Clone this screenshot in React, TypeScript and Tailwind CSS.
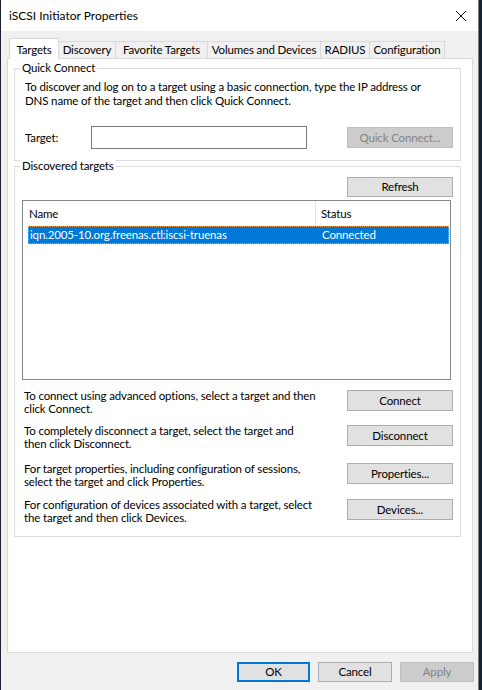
import React from 'react';

const FONT = { fontFamily: 'Lato, "Noto Sans", sans-serif' };

const tabs = [
  { label: 'Targets', w: 'w-[50px]', active: true },
  { label: 'Discovery', w: 'w-[57px]' },
  { label: 'Favorite Targets', w: 'w-[92px]' },
  { label: 'Volumes and Devices', w: 'w-[113px]' },
  { label: 'RADIUS', w: 'w-[49px]' },
  { label: 'Configuration', w: 'w-[75px]' },
];

const Btn: React.FC<{ children: React.ReactNode; disabled?: boolean; className?: string }> = ({ children, disabled, className = '' }) => (
  <button
    className={
      'flex items-center justify-center border leading-none whitespace-nowrap ' +
      (disabled ? 'bg-[#cccccc] border-[#bfbfbf] text-[#838383] ' : 'bg-[#e1e1e1] border-[#adadad] text-black ') +
      className
    }
  >
    {children}
  </button>
);

// group box with the caption sitting on the top border
const Group: React.FC<{ title: string; className?: string; children: React.ReactNode }> = ({ title, className = '', children }) => (
  <div className={'relative border border-[#dcdcdc] ' + className}>
    <span className="absolute -top-[8px] left-[5px] bg-white px-[2px] leading-[14px]">{title}</span>
    {children}
  </div>
);

const actions = [
  { text: ['To connect using advanced options, select a target and then', 'click Connect.'], btn: 'Connect', mt: 'mt-[10px]' },
  { text: ['To completely disconnect a target, select the target and', 'then click Disconnect.'], btn: 'Disconnect', mt: 'mt-[10px]' },
  { text: ['For target properties, including configuration of sessions,', 'select the target and click Properties.'], btn: 'Properties...', mt: 'mt-[13px]' },
  { text: ['For configuration of devices associated with a target, select', 'the target and then click Devices.'], btn: 'Devices...', mt: 'mt-[11px]' },
];

export default function App() {
  return (
    <div className="w-[482px] h-[690px] bg-[#18212e] flex text-[11.5px] tracking-[-0.15px] text-black whitespace-nowrap" style={FONT}>
      <div className="ml-[1px] w-[478px] h-full flex flex-col bg-[#f0f0f0] border-r border-[#7a7f87]">
        {/* Title bar */}
        <div className="h-[31px] bg-white flex items-center justify-between pl-[8px] pr-[10px]">
          <span className="text-[12px] tracking-normal">iSCSI Initiator Properties</span>
          <svg width="12" height="12" viewBox="0 0 12 12" className="mr-[1px]">
            <path d="M1 1 L11 11 M11 1 L1 11" stroke="#111" strokeWidth="1" fill="none" />
          </svg>
        </div>

        {/* Tabs */}
        <div className="pl-[6px] pt-[7px]">
          <div className="flex items-end h-[20px] pl-[2px]">
            {tabs.map((t) =>
              t.active ? (
                <div key={t.label} className={'relative z-10 -mb-[1px] h-[21px] bg-white border border-b-0 border-[#d9d9d9] flex items-start justify-center pt-[2px] ' + t.w}>
                  {t.label}
                </div>
              ) : (
                <div key={t.label} className={'h-[17px] border-t border-r border-[#d9d9d9] flex items-center justify-center ' + t.w}>
                  {t.label}
                </div>
              )
            )}
          </div>

          {/* Tab panel */}
          <div className="w-[466px] h-[595px] bg-white border border-[#d9d9d9] pl-[6px] pt-[9px]">
            <Group title="Quick Connect" className="w-[447px] h-[93px] pl-[10px] pt-[11px]">
              <div className="leading-[14px]">
                <div>To discover and log on to a target using a basic connection, type the IP address or</div>
                <div>DNS name of the target and then click Quick Connect.</div>
              </div>
              <div className="flex items-center mt-[18px]">
                <span className="w-[66px]">Target:</span>
                <div className="w-[216px] h-[23px] border border-[#7a7a7a] bg-white" />
                <Btn disabled className="ml-[40px] w-[106px] h-[21px]">Quick Connect...</Btn>
              </div>
            </Group>

            <Group title="Discovered targets" className="mt-[5px] w-[447px] h-[371px] pt-[10px]">
              <div className="flex justify-end pr-[7px]">
                <Btn className="w-[106px] h-[20px]">Refresh</Btn>
              </div>
              <div className="ml-[7px] mt-[3px] w-[429px] h-[180px] border border-[#828790] bg-white">
                <div className="flex h-[25px]">
                  <div className="w-[293px] border-r border-[#e5e5e5] flex items-center pl-[6px]">Name</div>
                  <div className="flex items-center pl-[5px]">Status</div>
                </div>
                <div className="ml-[5px] mr-[1px] h-[18px] bg-[#0078d7] text-white flex items-center border border-dotted border-[#f0a050]">
                  <span className="w-[288px] pl-[1px]">iqn.2005-10.org.freenas.ctl:iscsi-truenas</span>
                  <span className="pl-[5px]">Connected</span>
                </div>
              </div>
              <div className="pl-[9px] pr-[7px]">
                {actions.map((a) => (
                  <div key={a.btn} className={'flex justify-between items-start ' + a.mt}>
                    <div className="leading-[13px] -mt-[1px]">
                      <div>{a.text[0]}</div>
                      <div>{a.text[1]}</div>
                    </div>
                    <Btn className="w-[106px] h-[21px]">{a.btn}</Btn>
                  </div>
                ))}
              </div>
            </Group>
          </div>
        </div>

        {/* Footer buttons */}
        <div className="flex justify-end gap-[8px] pr-[4px] mt-[9px]">
          <Btn className="w-[73px] h-[20px] !border-2 !border-[#0078d7]">OK</Btn>
          <Btn className="w-[74px] h-[20px]">Cancel</Btn>
          <Btn disabled className="w-[74px] h-[20px]">Apply</Btn>
        </div>
      </div>
    </div>
  );
}
